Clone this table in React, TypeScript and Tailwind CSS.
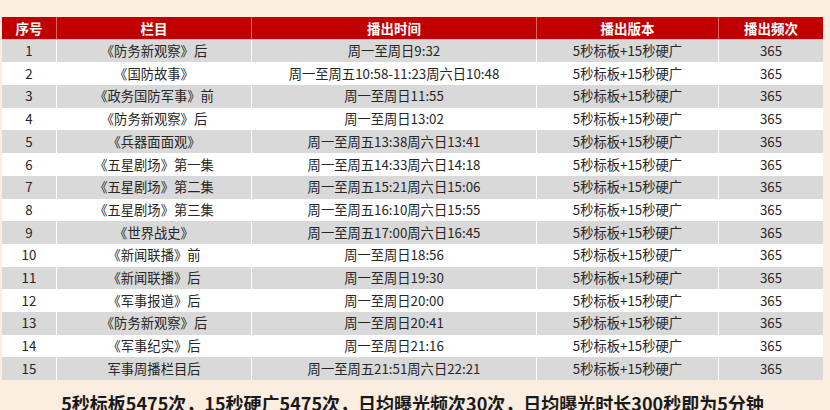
import React from "react";

const rows: [string, string, string][] = [
  ["《防务新观察》后", "周一至周日9:32", "5秒标板+15秒硬广"],
  ["《国防故事》", "周一至周五10:58-11:23周六日10:48", "5秒标板+15秒硬广"],
  ["《政务国防军事》前", "周一至周日11:55", "5秒标板+15秒硬广"],
  ["《防务新观察》后", "周一至周日13:02", "5秒标板+15秒硬广"],
  ["《兵器面面观》", "周一至周五13:38周六日13:41", "5秒标板+15秒硬广"],
  ["《五星剧场》第一集", "周一至周五14:33周六日14:18", "5秒标板+15秒硬广"],
  ["《五星剧场》第二集", "周一至周五15:21周六日15:06", "5秒标板+15秒硬广"],
  ["《五星剧场》第三集", "周一至周五16:10周六日15:55", "5秒标板+15秒硬广"],
  ["《世界战史》", "周一至周五17:00周六日16:45", "5秒标板+15秒硬广"],
  ["《新闻联播》前", "周一至周日18:56", "5秒标板+15秒硬广"],
  ["《新闻联播》后", "周一至周日19:30", "5秒标板+15秒硬广"],
  ["《军事报道》后", "周一至周日20:00", "5秒标板+15秒硬广"],
  ["《防务新观察》后", "周一至周日20:41", "5秒标板+15秒硬广"],
  ["《军事纪实》后", "周一至周日21:16", "5秒标板+15秒硬广"],
  ["军事周播栏目后", "周一至周五21:51周六日22:21", "5秒标板+15秒硬广"],
];

export default function App() {
  return (
    <div
      className="w-[830px] h-[410px] overflow-hidden bg-[#fbeee0] pl-[2px] pt-[17px]"
      style={{ fontFamily: '"Noto Sans CJK SC", "Noto Sans", sans-serif' }}
    >
      <div className="w-[821px] flex flex-col">
        <div className="flex h-[22.7px] bg-[#c00000] text-white font-bold text-[13.5px] border-b border-white/70">
          <div className="w-[55px] flex items-center justify-center border-r border-white/40">序号</div>
          <div className="w-[195px] flex items-center justify-center border-r border-white/40">栏目</div>
          <div className="w-[285px] flex items-center justify-center border-r border-white/40">播出时间</div>
          <div className="w-[182px] flex items-center justify-center border-r border-white/40">播出版本</div>
          <div className="w-[104px] flex items-center justify-center">播出频次</div>
        </div>
        {rows.map((r, i) => (
          <div
            key={i}
            className={
              "flex h-[22.7px] text-[13.3px] text-[#262626] " +
              (i % 2 === 0 ? "bg-[#d9d9d9]" : "bg-white")
            }
          >
            <div className="w-[55px] flex items-center justify-center border-r border-white">{i + 1}</div>
            <div className="w-[195px] flex items-center justify-center border-r border-white">{r[0]}</div>
            <div className="w-[285px] flex items-center justify-center border-r border-white">{r[1]}</div>
            <div className="w-[182px] flex items-center justify-center border-r border-white">{r[2]}</div>
            <div className="w-[104px] flex items-center justify-center">365</div>
          </div>
        ))}
        <div className="mt-[10px] text-center font-bold text-[18px] text-[#1a1a1a] leading-[26px] whitespace-nowrap">
          5秒标板5475次，15秒硬广5475次，日均曝光频次30次，日均曝光时长300秒即为5分钟
        </div>
      </div>
    </div>
  );
}
